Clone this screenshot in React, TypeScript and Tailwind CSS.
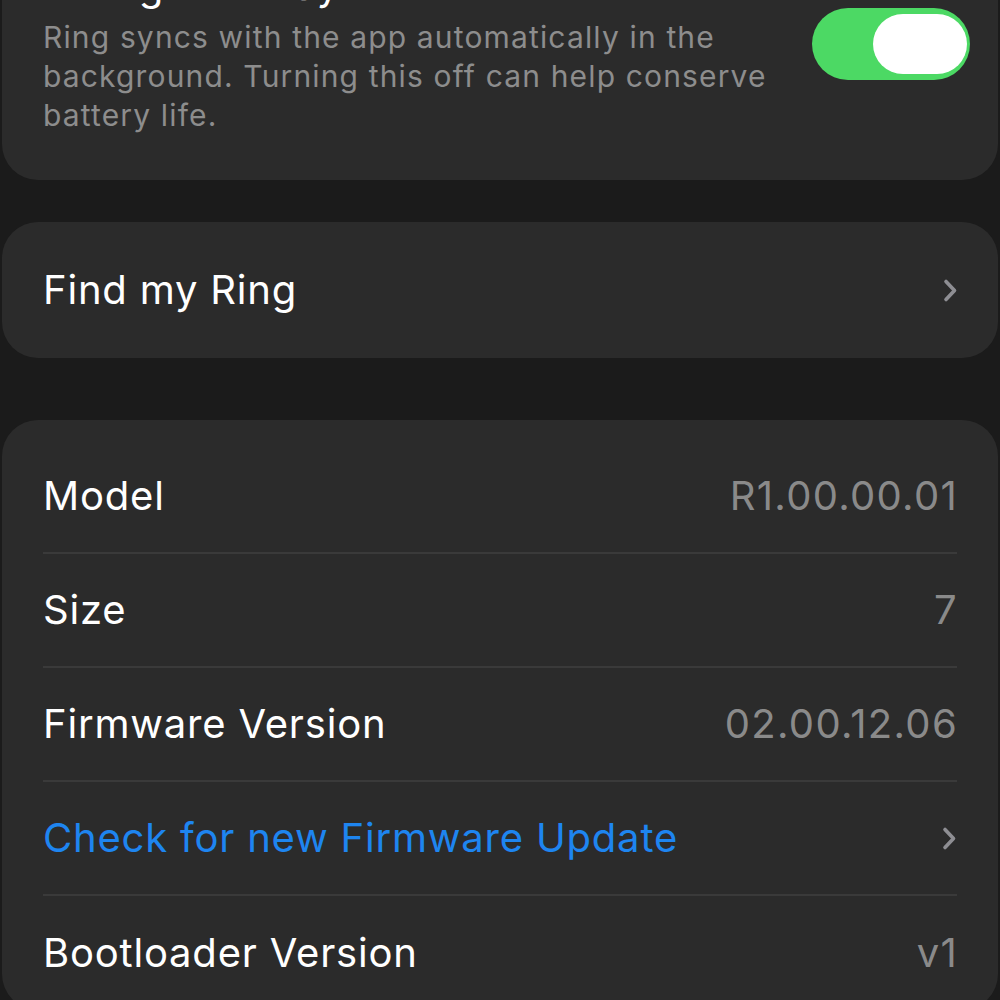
import React from 'react';

const Chevron: React.FC = () => (
  <svg width="15" height="25" viewBox="0 0 15 25" fill="none">
    <path d="M3 3.5 L11.5 12.5 L3 21.5" stroke="#8e8e93" strokeWidth="3.6" strokeLinecap="round" strokeLinejoin="round" />
  </svg>
);

const infoRows = [
  { label: 'Model', value: 'R1.00.00.01' },
  { label: 'Size', value: '7' },
  { label: 'Firmware Version', value: '02.00.12.06' },
  { label: 'Check for new Firmware Update', link: true },
  { label: 'Bootloader Version', value: 'v1' },
];

const App: React.FC = () => {
  return (
    <div className="h-[1000px] overflow-hidden bg-[#1b1b1b] px-[2px] font-['Inter','Liberation_Sans',sans-serif] tracking-[0.8px]">
      {/* background sync card, scrolled partly out of view */}
      <div className="-mt-[58px] rounded-[36px] bg-[#2b2b2b] pl-[41px] pr-[28px] pt-[20px] pb-[45px] flex items-start">
        <div className="flex-1">
          <div className="text-[40px] leading-[48px] text-white mb-[8px]">Background Sync</div>
          <p className="text-[30px] leading-[39px] text-[#8d8d8d] tracking-[1.15px] max-w-[740px]">
            Ring syncs with the app automatically in the background. Turning this off can help conserve battery life.
          </p>
        </div>
        <div className="mt-[46px] w-[158px] h-[72px] rounded-full bg-[#4cd964] flex items-center justify-end pr-[3px]">
          <div className="w-[94px] h-[60px] rounded-full bg-white" />
        </div>
      </div>

      <div className="mt-[42px] h-[136px] rounded-[36px] bg-[#2b2b2b] pl-[41px] pr-[40px] flex items-center justify-between">
        <span className="text-[40px] text-white">Find my Ring</span>
        <Chevron />
      </div>

      <div className="mt-[62px] rounded-[36px] bg-[#2b2b2b] px-[41px] pt-[20px]">
        {infoRows.map((row, i) => (
          <div
            key={row.label}
            className={`h-[114px] flex items-center justify-between ${i < infoRows.length - 1 ? 'border-b-2 border-[#3a3a3a]' : ''}`}
          >
            <span className={`text-[40px] ${row.link ? 'text-[#1e85f0]' : 'text-white'}`}>{row.label}</span>
            {row.link ? (
              <Chevron />
            ) : (
              <span className="text-[40px] text-[#8a8a8a] tracking-[1.3px] -mr-[1px]">{row.value}</span>
            )}
          </div>
        ))}
      </div>
    </div>
  );
};

export default App;
